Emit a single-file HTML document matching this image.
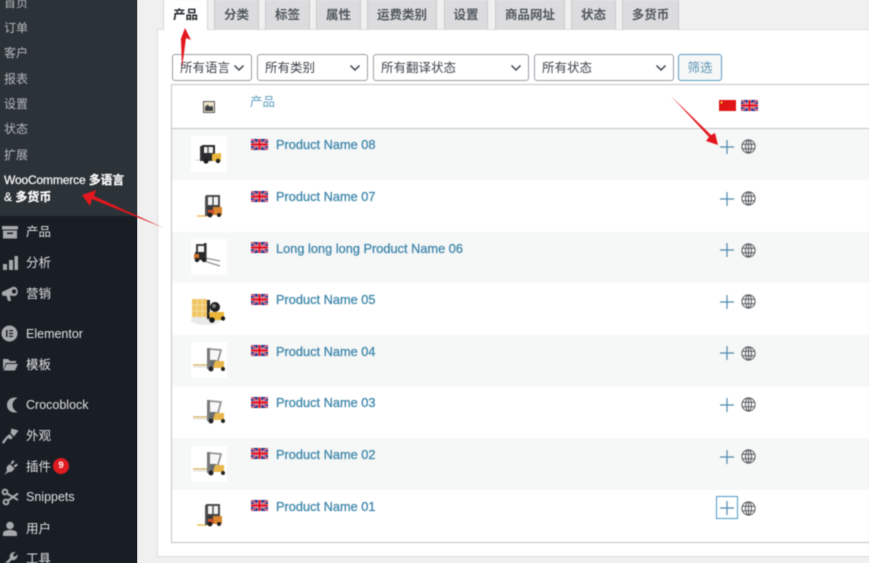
<!DOCTYPE html>
<html lang="zh">
<head>
<meta charset="utf-8">
<title>WooCommerce 多语言 &amp; 多货币</title>
<style>
html,body{margin:0;padding:0;width:869px;height:563px;overflow:hidden;background:#f0f0f1}
body{position:relative;font-family:"Liberation Sans","Noto Sans CJK SC",sans-serif;font-size:12.5px;color:#50575e;background:linear-gradient(#2c3338 0,#2c3338 216px,#191e25 216px,#191e25 563px) 0 0/137px 563px no-repeat,#f0f0f1}
#w{position:absolute;left:0;top:0;width:869px;height:563px;overflow:hidden;filter:blur(.42px)}
#w *{box-sizing:border-box}
.a{position:absolute}
.side{left:0;top:0;width:137px;height:563px;background:#191e25}
.sub{left:0;top:0;width:137px;height:216px;background:#2c3338}
.s{position:absolute;left:4px;color:#b4b9be;font-size:12px;line-height:16px;white-space:nowrap}
.m{position:absolute;left:26px;color:#dfe1e3;font-size:12.5px;line-height:16px;white-space:nowrap;margin-top:1px}
.i{position:absolute;left:1px;width:18px;height:18px;fill:#a7aaad;margin-top:1px}
.panel{left:157px;top:29px;width:720px;height:528px;background:#fff;border:1px solid #dcdcde}
.tab{position:absolute;top:0;height:30px;background:#dcdcde;border:1px solid #c9cacc;border-top:0;border-bottom:0;color:#50575e;font-weight:700;font-size:12.5px;line-height:30px;text-align:center}
.tab.on{background:#fff;color:#1d2327;border-color:#d5d6d8;z-index:2}
.sel{position:absolute;top:54px;height:27px;background:#fff;border:1px solid #9a9ea3;border-radius:3px;padding-left:7px;line-height:26px;color:#3c434a;font-size:12.5px}
.sel svg{position:absolute;right:6px;top:9px;width:12px;height:8px}
.btn{position:absolute;left:678px;top:54px;width:44px;height:27px;background:#f6f7f7;border:1px solid #5a9cc0;border-radius:3px;color:#5b93b4;text-align:center;line-height:26px;font-size:12.5px}
.tb{left:171px;top:84px;width:710px;height:459px;background:#fff;border:1px solid #c3c4c7}
.row{position:absolute;left:172px;width:700px}
.g{background:#f6f7f7}
.th{position:absolute;left:191px;width:36px;height:36px;background:#fff}
.fl{position:absolute;left:251px;width:17px;height:11px}
.n{position:absolute;left:276px;color:#3f87ab;font-size:12.7px;line-height:16px;letter-spacing:.05px;white-space:nowrap;-webkit-text-stroke:.3px #3f87ab}
.p{position:absolute;left:720px;width:14px;height:14px}
.gl{position:absolute;left:741px;width:15px;height:15px}
</style>
</head>
<body>
<svg width="0" height="0" style="position:absolute">
<defs>
<symbol id="uk" viewBox="0 0 17 11">
<rect width="17" height="11" fill="#232a86" rx="1"/>
<path d="M0 0L17 11M17 0L0 11" stroke="#eee" stroke-width="1.8"/>
<path d="M0 0L17 11M17 0L0 11" stroke="#d8182e" stroke-width=".9"/>
<path d="M8.5 0V11M0 5.5H17" stroke="#f5f0f0" stroke-width="3.2"/>
<path d="M8.5 0V11M0 5.5H17" stroke="#e3101f" stroke-width="2.2"/>
</symbol>
<symbol id="plus" viewBox="0 0 14 14"><path d="M7 0V14M0 7H14" stroke="#4f8bad" stroke-width="1.2" fill="none"/></symbol>
<symbol id="globe" viewBox="0 0 15 15"><g fill="none" stroke="#54585c" stroke-width="1"><circle cx="7.5" cy="7.5" r="6.6"/><ellipse cx="7.5" cy="7.500" rx="3" ry="6.6"/><path d="M7.500 1V14M1 5.200H14M1 9.800H14"/></g></symbol>
<symbol id="fa" viewBox="0 0 36 36">
<path d="M4 24H10" stroke="#d8d8d8" stroke-width="1"/>
<rect x="9" y="10" width="4" height="15" fill="#39393b"/>
<path d="M12 10H23V18H12Z" fill="#f2f2f2" stroke="#2a2a2c" stroke-width="2"/>
<path d="M17 10V18" stroke="#3a3a3c" stroke-width="1.200"/>
<rect x="11" y="17" width="12" height="8" fill="#2a2a2c"/>
<path d="M21 18L30 17V25H21Z" fill="#e9b53c"/>
<circle cx="15" cy="25" r="2.600" fill="#1f1f21"/><circle cx="27" cy="25" r="2.200" fill="#1f1f21"/>
</symbol>
<symbol id="fb" viewBox="0 0 36 36">
<path d="M6 28H16" stroke="#eebd52" stroke-width="1.400"/>
<rect x="14" y="8" width="3" height="20" fill="#55575a"/>
<path d="M16 8H28V18H16Z" fill="#f4f4f4" stroke="#47494c" stroke-width="2"/>
<path d="M22 8V18" stroke="#47494c" stroke-width="1.400"/>
<rect x="16" y="18" width="13" height="9" fill="#3a3a3c"/>
<rect x="22" y="19" width="9" height="8" fill="#d9862e"/>
<rect x="17" y="22" width="6" height="4" fill="#d2542a"/>
<circle cx="19" cy="27" r="2.400" fill="#1f1f21"/><circle cx="28" cy="27" r="2" fill="#1f1f21"/>
</symbol>
<symbol id="fc" viewBox="0 0 36 36">
<path d="M14 19L29 22M13 22L29 27" stroke="#8f8f8f" stroke-width="1.200"/>
<rect x="13" y="4" width="2.600" height="18" fill="#3e3e40"/>
<path d="M6 6H14V14H6Z" fill="#f3f3f3" stroke="#2a2a2c" stroke-width="1.800"/>
<rect x="4" y="13" width="10" height="8" fill="#2a2a2c"/>
<rect x="3" y="15" width="5" height="5" fill="#cc6f28"/>
<circle cx="6" cy="21" r="2.200" fill="#1f1f21"/><circle cx="13" cy="21" r="2.200" fill="#1f1f21"/>
</symbol>
<symbol id="fd" viewBox="0 0 36 36">
<ellipse cx="15" cy="29" rx="15" ry="5" fill="#e9e9e9"/>
<rect x="1" y="8" width="15" height="18" fill="#efc566"/>
<path d="M1 14H16M1 20H16M6 8V26M11 8V26" stroke="#f6dc9c" stroke-width="1"/>
<rect x="16" y="9" width="3" height="19" fill="#232325"/>
<circle cx="24" cy="16" r="5" fill="#1f1f21"/>
<circle cx="23" cy="15" r="2" fill="#77797b"/>
<path d="M18 21H33V27L29 29H19Z" fill="#ebb538"/>
<circle cx="21" cy="29" r="2.800" fill="#19191b"/><circle cx="32" cy="27.500" r="2.200" fill="#19191b"/>
</symbol>
<symbol id="fe" viewBox="0 0 36 36">
<path d="M2 23H18" stroke="#d6b264" stroke-width="1.400"/>
<path d="M2 25H17" stroke="#ddd" stroke-width="1"/>
<rect x="16" y="6" width="3" height="21" fill="#77797b"/>
<path d="M19 7L30 8L27 19H19" fill="#f7f7f7" stroke="#929496" stroke-width="1.800"/>
<rect x="19" y="18" width="6" height="8" fill="#6a6c6e"/>
<path d="M24 19H33V26H22Z" fill="#e9b64c"/>
<circle cx="20" cy="27" r="2.500" fill="#232325"/><circle cx="32" cy="27" r="2" fill="#232325"/>
</symbol>
</defs>
</svg>

<div id="w">
<div class="a side"></div>
<div class="a sub"></div>
<div class="s" style="top:-5px">首页</div>
<div class="s" style="top:20px">订单</div>
<div class="s" style="top:45px">客户</div>
<div class="s" style="top:71px">报表</div>
<div class="s" style="top:96px">设置</div>
<div class="s" style="top:121px">状态</div>
<div class="s" style="top:147px">扩展</div>
<div class="s" style="top:172px;color:#fff;-webkit-text-stroke:.2px #fff"><span style="letter-spacing:-.15px">WooCommerce</span> <b style="font-size:11.800px">多语言</b></div>
<div class="s" style="top:189px;color:#fff;-webkit-text-stroke:.2px #fff">&amp; <b>多货币</b></div>

<svg class="i" style="top:222px" viewBox="0 0 18 18"><path d="M1 3H17V6.500H1ZM2 7.500H16V15.500H2ZM6 9.500V11H12V9.500Z" fill-rule="evenodd"/></svg>
<div class="m" style="top:223px">产品</div>
<svg class="i" style="top:253px" viewBox="0 0 18 18"><path d="M2 10H6V16H2ZM8 6H12V16H8ZM13.500 2H17V16H13.500Z"/></svg>
<div class="m" style="top:254px">分析</div>
<svg class="i" style="top:284px" viewBox="0 0 18 18"><path d="M1 7L10.500 2.500C12.500 1 15.500 1.500 16.500 5C17.500 8.500 15.500 11 13.500 11L9 10.500L10 16H7L5.500 11L1 10.500Z"/><circle cx="13" cy="6.500" r="2.200" fill="#191e25"/></svg>
<div class="m" style="top:285px">营销</div>
<svg class="i" style="top:324px;left:1px;width:17px;height:17px" viewBox="0 0 17 17"><path fill-rule="evenodd" d="M8.500 0.500A8 8 0 1 0 8.500 16.500A8 8 0 1 0 8.500 0.500ZM5 5H6.500V12H5ZM8 5H12V6.300H8ZM8 7.900H12V9.200H8ZM8 10.700H12V12H8Z"/></svg>
<div class="m" style="top:325px">Elementor</div>
<svg class="i" style="top:355px" viewBox="0 0 18 18"><path d="M2 3H7L9 5H15V7H5L2.500 13H2ZM5.500 8H17L14 14.500H2.500Z"/></svg>
<div class="m" style="top:356px">模板</div>
<svg class="i" style="top:395px;left:3px" viewBox="0 0 18 18"><path d="M12 1.500C7.500 1.500 4 4.500 4 9S7.500 16.500 12 16.500C13 16.500 14 16.300 14.500 16C12 15 9.500 12.500 9.500 9S12 3 14.500 2C14 1.700 13 1.500 12 1.500Z"/></svg>
<div class="m" style="top:396px">Crocoblock</div>
<svg class="i" style="top:426px" viewBox="0 0 18 18"><path d="M10.500 1.500L17.500 3.500L13 9.500L9.500 6ZM8.500 7L12 10.500L9.500 12.500L7 11L2.500 17L1 15L5.500 9.500Z"/></svg>
<div class="m" style="top:427px">外观</div>
<svg class="i" style="top:457px;left:2px" viewBox="0 0 18 18"><path d="M2.500 17L5 12.500C4 10.500 4.500 8.500 6.500 7L8 6L12.500 10.500L11 12.500C9.500 14 8 14.500 6.500 14ZM8.500 5L11 2L12.500 3.500L10 6.500ZM11.500 8L14.500 5.500L16 7L13 9.500Z"/></svg>
<div class="m" style="top:458px">插件</div>
<div class="a" style="left:53px;top:458px;width:16px;height:16px;border-radius:50%;background:#e01b22;color:#fff;font-size:9.500px;line-height:16px;text-align:center;font-weight:700">9</div>
<svg class="i" style="top:487px" viewBox="0 0 18 18"><g fill="none" stroke="#a7aaad" stroke-width="2"><circle cx="4" cy="4" r="2.400"/><circle cx="5" cy="14" r="2.400"/><path d="M6 5.500L17 12M7 12.500L17 5.500"/></g></svg>
<div class="m" style="top:488px">Snippets</div>
<svg class="i" style="top:519px" viewBox="0 0 18 18"><circle cx="9" cy="5.500" r="3.800"/><path d="M2 16V13.500C2 11 5 10 9 10S16 11 16 13.500V16Z"/></svg>
<div class="m" style="top:520px">用户</div>
<svg class="i" style="top:549px" viewBox="0 0 18 18"><path d="M2 15L9 8C8 5 10 1.500 14.500 2L11.800 4.700L13.500 7L16.500 4.500C17 8 14 11 10.500 10L4 17Z"/></svg>
<div class="m" style="top:550px">工具</div>

<div class="a panel"></div>
<div class="tab on" style="left:163px;width:45px">产品</div>
<div class="tab" style="left:214px;width:45px">分类</div>
<div class="tab" style="left:265px;width:45px">标签</div>
<div class="tab" style="left:316px;width:45px">属性</div>
<div class="tab" style="left:367px;width:70px">运费类别</div>
<div class="tab" style="left:444px;width:44px">设置</div>
<div class="tab" style="left:495px;width:70px">商品网址</div>
<div class="tab" style="left:571px;width:45px">状态</div>
<div class="tab" style="left:622px;width:57px">多货币</div>

<div class="sel" style="left:172px;width:80px">所有语言<svg viewBox="0 0 12 8"><path d="M1.500 1.500L6 6L10.500 1.500" fill="none" stroke="#3c434a" stroke-width="1.500"/></svg></div>
<div class="sel" style="left:257px;width:111px">所有类别<svg viewBox="0 0 12 8"><path d="M1.500 1.500L6 6L10.500 1.500" fill="none" stroke="#3c434a" stroke-width="1.500"/></svg></div>
<div class="sel" style="left:373px;width:156px">所有翻译状态<svg viewBox="0 0 12 8"><path d="M1.500 1.500L6 6L10.500 1.500" fill="none" stroke="#3c434a" stroke-width="1.500"/></svg></div>
<div class="sel" style="left:534px;width:140px">所有状态<svg viewBox="0 0 12 8"><path d="M1.500 1.500L6 6L10.500 1.500" fill="none" stroke="#3c434a" stroke-width="1.500"/></svg></div>
<div class="btn">筛选</div>

<div class="a tb"></div>
<svg class="a" style="left:203px;top:101px" width="12" height="12" viewBox="0 0 12 12"><rect x=".5" y=".5" width="11" height="11" fill="#f1e6c8" stroke="#55595c"/><path d="M2 10V6L4.500 3.500L7 6L8.500 4.500L10 6V10Z" fill="#3c3f42"/></svg>
<div class="a" style="left:250px;top:94px;color:#5b9cbd;font-size:12.500px;line-height:16px">产品</div>
<svg class="a" style="left:719px;top:100px" width="17" height="11" viewBox="0 0 17 11"><rect width="17" height="11" fill="#e01414"/><rect x="1.500" y="1.500" width="2" height="2" fill="#f2d040"/></svg>
<svg class="a" style="left:741px;top:100px" width="17" height="11"><use href="#uk"/></svg>
<div class="a" style="left:172px;top:128px;width:700px;height:1px;background:#c3c4c7"></div>

<div class="row g" style="top:129px;height:51px"></div>
<div class="row g" style="top:232px;height:51px"></div>
<div class="row g" style="top:335px;height:52px"></div>
<div class="row g" style="top:438px;height:52px"></div>

<!-- 1 -->
<svg class="th" style="top:136px"><use href="#fa"/></svg>
<svg class="fl" style="top:139px"><use href="#uk"/></svg>
<div class="n" style="top:137px">Product Name 08</div>
<svg class="p" style="top:140px"><use href="#plus"/></svg>
<svg class="gl" style="top:139px"><use href="#globe"/></svg>
<!-- 2 -->
<svg class="th" style="top:188px"><use href="#fb"/></svg>
<svg class="fl" style="top:191px"><use href="#uk"/></svg>
<div class="n" style="top:189px">Product Name 07</div>
<svg class="p" style="top:192px"><use href="#plus"/></svg>
<svg class="gl" style="top:191px"><use href="#globe"/></svg>
<!-- 3 -->
<svg class="th" style="top:239px"><use href="#fc"/></svg>
<svg class="fl" style="top:242px"><use href="#uk"/></svg>
<div class="n" style="top:241px">Long long long Product Name 06</div>
<svg class="p" style="top:243px"><use href="#plus"/></svg>
<svg class="gl" style="top:243px"><use href="#globe"/></svg>
<!-- 4 -->
<svg class="th" style="top:291px"><use href="#fd"/></svg>
<svg class="fl" style="top:294px"><use href="#uk"/></svg>
<div class="n" style="top:292px">Product Name 05</div>
<svg class="p" style="top:295px"><use href="#plus"/></svg>
<svg class="gl" style="top:294px"><use href="#globe"/></svg>
<!-- 5 -->
<svg class="th" style="top:342px"><use href="#fe"/></svg>
<svg class="fl" style="top:345px"><use href="#uk"/></svg>
<div class="n" style="top:344px">Product Name 04</div>
<svg class="p" style="top:346px"><use href="#plus"/></svg>
<svg class="gl" style="top:346px"><use href="#globe"/></svg>
<!-- 6 -->
<svg class="th" style="top:394px"><use href="#fe"/></svg>
<svg class="fl" style="top:397px"><use href="#uk"/></svg>
<div class="n" style="top:395px">Product Name 03</div>
<svg class="p" style="top:398px"><use href="#plus"/></svg>
<svg class="gl" style="top:397px"><use href="#globe"/></svg>
<!-- 7 -->
<svg class="th" style="top:446px"><use href="#fe"/></svg>
<svg class="fl" style="top:448px"><use href="#uk"/></svg>
<div class="n" style="top:447px">Product Name 02</div>
<svg class="p" style="top:450px"><use href="#plus"/></svg>
<svg class="gl" style="top:449px"><use href="#globe"/></svg>
<!-- 8 -->
<svg class="th" style="top:497px"><use href="#fb"/></svg>
<svg class="fl" style="top:500px"><use href="#uk"/></svg>
<div class="n" style="top:499px">Product Name 01</div>
<div class="a" style="left:716px;top:496px;width:22px;height:23px;border:1.500px solid #4f9ac4"></div>
<svg class="p" style="top:501px"><use href="#plus"/></svg>
<svg class="gl" style="top:501px"><use href="#globe"/></svg>

<svg class="a" style="left:0;top:0;z-index:5" width="869" height="563" viewBox="0 0 869 563">
<polygon points="82,195 96,190 94,196 164,228 92,199 90,206" fill="#e3171d"/>
<polygon points="185,28 191,40 186,38 182,68 181,39 180,41" fill="#e3171d"/>
<polygon points="671,96 711,135 715,133 718,145 706,141 709,137" fill="#e3171d"/>
</svg>
</div>
</body>
</html>
